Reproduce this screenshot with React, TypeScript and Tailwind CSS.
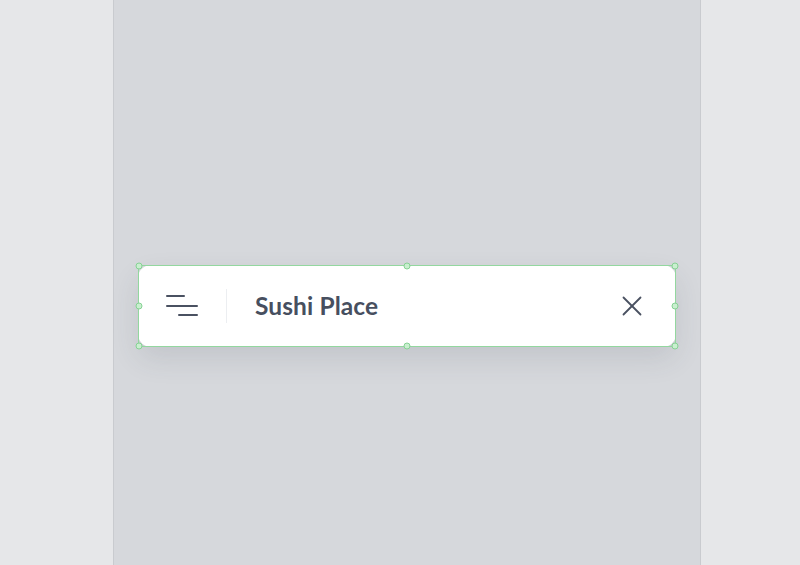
import React from "react";

function MenuIcon() {
  return (
    <svg width="34" height="24" viewBox="0 0 34 24" fill="none" stroke="#4a5161" strokeWidth="2" strokeLinecap="round">
      <line x1="1" y1="2" x2="18" y2="2" />
      <line x1="1" y1="12" x2="31" y2="12" />
      <line x1="13" y1="21" x2="31" y2="21" />
    </svg>
  );
}

function CloseIcon() {
  return (
    <svg width="20" height="20" viewBox="0 0 20 20" fill="none" stroke="#4a5161" strokeWidth="1.8" strokeLinecap="round">
      <line x1="1.5" y1="1.5" x2="18.5" y2="18.5" />
      <line x1="18.5" y1="1.5" x2="1.5" y2="18.5" />
    </svg>
  );
}

function Handle({ className }: { className: string }) {
  return (
    <span
      className={`absolute w-[7px] h-[7px] rounded-full bg-[#c9efcf] border border-[#86d294] -translate-x-1/2 -translate-y-1/2 ${className}`}
    />
  );
}

export default function App() {
  return (
    <div className="w-[800px] h-[565px] bg-[#e6e7e9] flex pl-[113px] overflow-hidden">
      <div className="w-[588px] h-full bg-[#d6d8dc] border-x border-[#c9cbcf] px-[24px] pt-[265px]">
        <div className="relative">
          <div
            className="h-[82px] bg-white rounded-[13px] shadow-[0_12px_28px_rgba(60,65,80,0.12)] flex items-center pl-[28px] pr-[34px]"
            style={{ fontFamily: "Lato, 'Open Sans', sans-serif" }}
          >
            <MenuIcon />
            <div className="w-px h-[34px] bg-[#eceef1] ml-[26px] mr-[28px]" />
            <span className="text-[24.5px] font-bold text-[#474f5f] tracking-[0.1px] flex-1 leading-none pt-[1px]">Sushi Place</span>
            <CloseIcon />
          </div>
          {/* selection frame */}
          <div className="absolute inset-0 border border-[#93d79f] pointer-events-none">
            <Handle className="left-0 top-0" />
            <Handle className="left-1/2 top-0" />
            <Handle className="left-full top-0" />
            <Handle className="left-0 top-1/2" />
            <Handle className="left-full top-1/2" />
            <Handle className="left-0 top-full" />
            <Handle className="left-1/2 top-full" />
            <Handle className="left-full top-full" />
          </div>
        </div>
      </div>
    </div>
  );
}
